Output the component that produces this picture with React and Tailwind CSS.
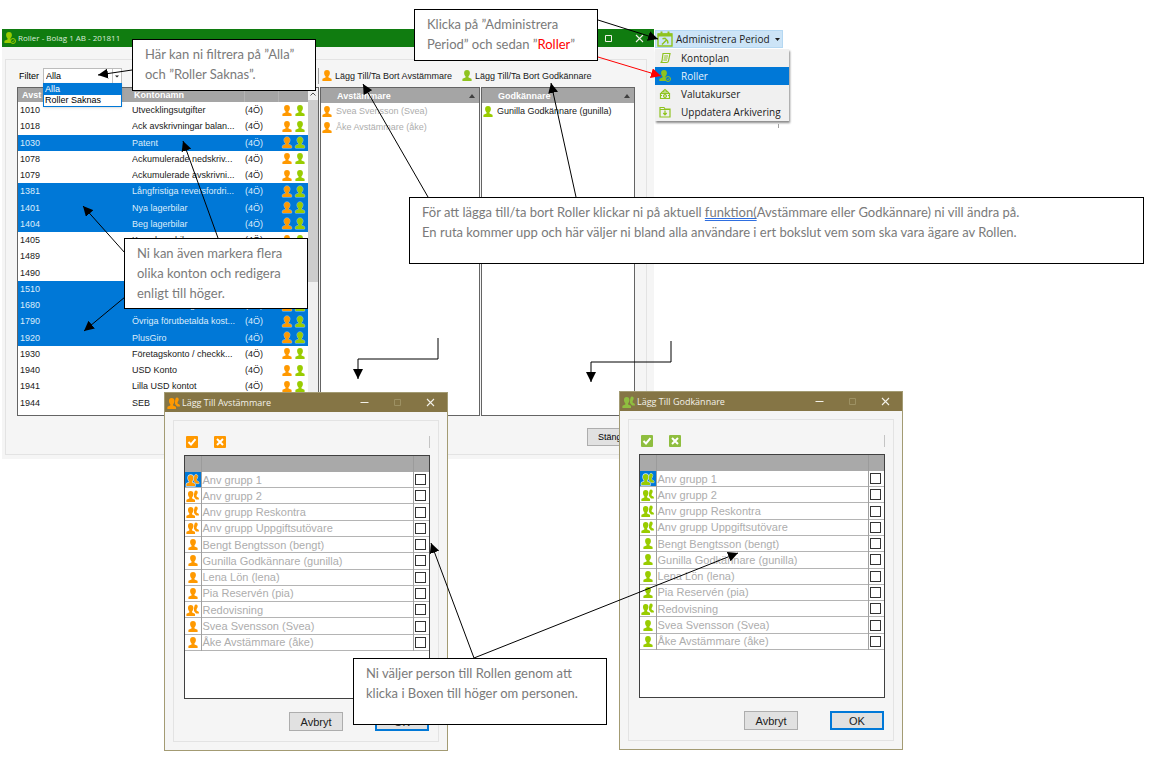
import { useId } from "react";

const ORANGE = "#ff9900";
const GREEN = "#99cc00";

const accounts = [
  ["1010", "Utvecklingsutgifter", "(4Ö)"],
  ["1018", "Ack avskrivningar balan...", "(4Ö)"],
  ["1030", "Patent", "(4Ö)", true],
  ["1078", "Ackumulerade nedskriv...", "(4Ö)"],
  ["1079", "Ackumulerade avskrivni...", "(4Ö)"],
  ["1381", "Långfristiga reversfordri...", "(4Ö)", true],
  ["1401", "Nya lagerbilar", "(4Ö)", true],
  ["1404", "Beg lagerbilar", "(4Ö)", true],
  ["1405", "Kons lagerbilar", "(4Ö)"],
  ["1489", "", ""],
  ["1490", "", ""],
  ["1510", "", "", true],
  ["1680", "Andra kortfristiga fordri...", "(4Ö)", true],
  ["1790", "Övriga förutbetalda kost...", "(4Ö)", true],
  ["1920", "PlusGiro", "(4Ö)", true],
  ["1930", "Företagskonto / checkk...", "(4Ö)"],
  ["1940", "USD Konto", "(4Ö)"],
  ["1941", "Lilla USD kontot", "(4Ö)"],
  ["1944", "SEB", ""],
];

const users = [
  ["Anv grupp 1", true],
  ["Anv grupp 2", true],
  ["Anv grupp Reskontra", true],
  ["Anv grupp Uppgiftsutövare", true],
  ["Bengt Bengtsson (bengt)"],
  ["Gunilla Godkännare (gunilla)"],
  ["Lena Lön (lena)"],
  ["Pia Reservén (pia)"],
  ["Redovisning", true],
  ["Svea Svensson (Svea)"],
  ["Åke Avstämmare (åke)"],
];

const PERSON =
  "M5 0C7 0 7.9 1.2 7.9 3C7.9 4.6 7.2 5.6 6.5 6.3V7.4C7 8 9.6 7.9 9.6 9.2V11H0.4V9.2C0.4 7.9 3 8 3.5 7.4V6.3C2.8 5.6 2.1 4.6 2.1 3C2.1 1.2 3 0 5 0Z";

function Person({ color, outline }) {
  return (
    <svg viewBox="0 0 10 11" className="h-[11px] w-[10px] shrink-0 overflow-visible" aria-hidden="true">
      <path d={PERSON} fill={color} stroke={outline ? "#a9d0f0" : "none"} strokeWidth="0.9" paintOrder="stroke" />
    </svg>
  );
}

function Group({ color, outline, gap = "#ffffff" }) {
  return (
    <svg viewBox="0 0 13 12" className="h-3 w-[13px] shrink-0 overflow-visible" aria-hidden="true">
      <path
        d="M10 0.4C11.3 0.4 11.8 1.4 11.7 2.6C11.6 3.8 11.1 4.6 10.6 5.2V6.6C11 7.3 12.9 7.2 12.9 8.6V9.6H10L8 7V4L8.6 1.6C8.9 0.8 9.4 0.4 10 0.4Z"
        fill={color}
        stroke={outline ? "#d3e7f8" : "none"}
        strokeWidth="0.9"
        paintOrder="stroke"
      />
      <g transform="translate(0 1) scale(0.94 1)">
        <path d={PERSON} fill={color} stroke={outline ? "#d3e7f8" : gap} strokeWidth="1.4" paintOrder="stroke" />
      </g>
    </svg>
  );
}

function PersonCheck({ color, ring }) {
  return (
    <svg viewBox="0 0 12 12" className="h-3 w-3 shrink-0" aria-hidden="true">
      <path d={PERSON} fill={color} />
      <circle cx="9" cy="9" r="2.5" fill={ring} stroke={color} strokeWidth="1" />
      <path d="M7.8 9.1L8.8 10L10.3 8.1" fill="none" stroke={color} strokeWidth="0.8" />
    </svg>
  );
}

function WindowButton({ kind, dim }) {
  const label = { min: "Minimera", max: "Maximera", close: "Stäng fönster" }[kind];
  return (
    <button type="button" aria-label={label} className={dim ? "text-[#9d9163]" : "text-[#f3f1e9]"}>
      <svg viewBox="0 0 9 9" className="h-[9px] w-[9px]" fill="none" stroke="currentColor">
        {kind === "min" && <path d="M0.5 4.5H8.5" />}
        {kind === "max" && <path d="M1.5 1.5H7.5V7.5H1.5Z" />}
        {kind === "close" && <path d="M1 1L8 8M8 1L1 8" strokeWidth="1.1" />}
      </svg>
    </button>
  );
}

function SortMark() {
  return (
    <svg viewBox="0 0 6 4" className="h-1 w-1.5" aria-hidden="true">
      <path d="M0 4L3 0L6 4Z" fill="#404040" />
    </svg>
  );
}

function AccountTable() {
  return (
    <div className="flex h-full border border-[#646464] bg-white">
      <table className="h-[323px] flex-1 table-fixed border-collapse self-start">
        <colgroup>
          <col className="w-[114px]" />
          <col className="w-[112px]" />
          <col className="w-[34px]" />
          <col />
        </colgroup>
        <thead>
          <tr className="h-[14px] bg-[#a5a5a5] text-left font-bold text-white">
            <th className="p-0 pl-1">Avst</th>
            <th className="p-0 pl-0.5">Kontonamn</th>
            <th className="border-x border-[#b4b4b4] p-0" />
            <th className="p-0" />
          </tr>
        </thead>
        <tbody>
          {accounts.map(([number, name, group, selected]) => (
            <tr key={number} className={selected ? "bg-[#0078d7] text-[#dcecfa]" : "text-[#202020]"}>
              <td className="p-0 pl-0.5">{number}</td>
              <td className="overflow-hidden p-0 whitespace-nowrap">{name}</td>
              <td className="p-0 pl-px">{group}</td>
              <td className="p-0">
                <div className="flex justify-end gap-[3px] pr-[3px]">
                  <Person color={ORANGE} outline={selected} />
                  <Person color={GREEN} outline={selected} />
                </div>
              </td>
            </tr>
          ))}
        </tbody>
      </table>
      <div className="flex w-2.5 flex-col bg-[#f0f0f0]">
        <div className="flex h-3 items-center justify-center">
          <svg viewBox="0 0 6 4" className="h-1 w-1.5" fill="none" stroke="#505050" aria-hidden="true">
            <path d="M0.5 3.5L3 1L5.5 3.5" />
          </svg>
        </div>
        <div className="h-[182px] bg-[#cdcdcd]" />
      </div>
    </div>
  );
}

function RoleList({ title, children }) {
  return (
    <section className="h-full border border-[#646464] bg-white">
      <header className="flex h-[15px] items-center justify-between bg-[#a5a5a5] pr-1 pl-4 font-bold text-white">
        <h2>{title}</h2>
        <SortMark />
      </header>
      <ul>{children}</ul>
    </section>
  );
}

function RoleItem({ color, muted, children }) {
  return (
    <li className={`flex h-4 items-center gap-1 pl-px whitespace-nowrap ${muted ? "text-[#adadad]" : "text-[#202020]"}`}>
      <Person color={color} />
      {children}
    </li>
  );
}

function MainWindow() {
  return (
    <section className="absolute top-[29px] left-0.5 w-[652px] bg-[#f5f5f5] font-['Liberation_Sans',sans-serif] text-[9px] leading-3">
      <header className="flex h-[18px] items-center gap-0.5 bg-[#107c10] pr-2.5 pl-0.5 text-[#dcebdc]">
        <PersonCheck color={GREEN} ring="#107c10" />
        <h1 className="flex-1 font-['Open_Sans',sans-serif] text-[8px]">Roller - Bolag 1 AB - 201811</h1>
        <div className="flex items-center gap-[22px]">
          <WindowButton kind="max" />
          <WindowButton kind="close" />
        </div>
      </header>
      <div className="pt-3 pr-[7px] pb-1 pl-[3px]">
        <div className="border border-[#e3e3e3] pr-[5px] pb-2 pl-[11px]">
          <div className="flex h-[27px] items-center pt-1">
            <div className="relative flex w-[302px] items-center gap-1 pl-0.5">
              <label htmlFor="filter">Filter</label>
              <div className="relative">
                <select id="filter" className="h-4 w-[79px] appearance-none border border-[#bcbcbc] bg-white px-0.5">
                  <option>Alla</option>
                  <option>Roller Saknas</option>
                </select>
                <svg viewBox="0 0 9 14" className="pointer-events-none absolute top-px right-px h-3.5 w-[9px]" aria-hidden="true">
                  <path d="M0.5 0V14" stroke="#c4c4c4" />
                  <path d="M3 6.5H7L5 8.5Z" fill="#202020" />
                </svg>
                <ul className="absolute top-[15px] left-0 z-10 w-[79px] border border-[#0078d7] bg-white leading-[11px] shadow">
                  <li className="bg-[#0078d7] px-px text-white">Alla</li>
                  <li className="px-px">Roller Saknas</li>
                </ul>
              </div>
              <span className="ml-auto h-4 w-px bg-[#a0a0a0]" />
            </div>
            <div className="flex gap-2.5 pl-[3px] text-[#202020]">
              <button type="button" className="flex items-center gap-[3px] whitespace-nowrap">
                <Person color={ORANGE} />
                Lägg Till/Ta Bort Avstämmare
              </button>
              <button type="button" className="flex items-center gap-[3px] whitespace-nowrap">
                <Person color="#8fc31f" />
                Lägg Till/Ta Bort Godkännare
              </button>
            </div>
          </div>
          <div className="grid h-[329px] grid-cols-[302px_160px_1fr] gap-px pr-1.5">
            <AccountTable />
            <RoleList title="Avstämmare">
              <RoleItem color={ORANGE} muted>Svea Svensson (Svea)</RoleItem>
              <RoleItem color={ORANGE} muted>Åke Avstämmare (åke)</RoleItem>
            </RoleList>
            <RoleList title="Godkännare">
              <RoleItem color={GREEN}>Gunilla Godkännare (gunilla)</RoleItem>
            </RoleList>
          </div>
          <div className="flex justify-end pt-3">
            <button type="button" className="h-[18px] w-[54px] border border-[#adadad] bg-[#e1e1e1] pl-2.5 text-left">Stäng</button>
          </div>
        </div>
      </div>
    </section>
  );
}

const menu = [
  ["Kontoplan", <path key="a" d="M4 1.5H11L9.5 9C9.3 10.2 8.5 10.5 7.5 10.5H1.5C2.5 10.3 2.8 9.8 3 9ZM5.2 4H9M4.8 6H8.6M4.4 8H8" />],
  ["Roller", null],
  ["Valutakurser", <path key="c" d="M1.5 5.5H10.5V10.5H1.5ZM2 5L6 1.5L10 5M4 4H8M6 6.6A1.4 1.4 0 1 0 6.01 6.6M2 7.5H3M9 7.5H10" />],
  ["Uppdatera Arkivering", <path key="d" d="M1 1.5H5L6 3H11V11H1ZM6 4.5V8.5M4.3 7L6 8.8L7.7 7M1 3.5H11" />],
];

function PeriodMenu() {
  return (
    <nav className="absolute top-[30px] left-[655px] w-[134px] font-['Open_Sans',sans-serif] text-[10px] leading-4 text-[#1a1a1a]">
      <button type="button" className="flex h-[18px] items-center gap-[3px] border border-[#b5d8f2] bg-[#cce4f7] pr-0.5 pl-px whitespace-nowrap">
        <svg viewBox="0 0 16 16" className="h-4 w-4" aria-hidden="true">
          <path d="M1 3H15V15H1Z" fill="none" stroke="#8fc31f" strokeWidth="1.4" />
          <path d="M1 2.5H15V5.5H1Z" fill="#8fc31f" />
          <path d="M4.5 0.5V3.5M11.5 0.5V3.5" stroke="#8fc31f" strokeWidth="2" />
          <path d="M5 13.5L9.5 9M5.5 7.8L8 7.3L10.5 9.8L11 12.5" fill="none" stroke="#8fc31f" strokeWidth="1.5" />
        </svg>
        <span className="pr-0.5">Administrera Period</span>
        <svg viewBox="0 0 5 3" className="h-[3px] w-[5px]" aria-hidden="true">
          <path d="M0 0H5L2.5 3Z" fill="#202020" />
        </svg>
      </button>
      <ul className="mt-px bg-[#f0f0f0] shadow-[1px_2px_2px_#8c8c8c]">
        {menu.map(([label, icon]) => (
          <li key={label} className={label === "Roller" ? "bg-[#0078d7] text-[#e6f2fc]" : ""}>
            <a href="#roller" className="flex h-[18px] items-center gap-2.5 pl-1 whitespace-nowrap">
              {icon ? (
                <svg viewBox="0 0 12 12" className="h-3 w-3 shrink-0" fill="none" stroke="#8fc31f" strokeWidth="1.2" aria-hidden="true">
                  {icon}
                </svg>
              ) : (
                <PersonCheck color="#8fc31f" ring="#0078d7" />
              )}
              {label}
            </a>
          </li>
        ))}
      </ul>
      <div className="mt-[3px] mr-2.5 ml-auto h-1 w-px bg-[#a0a0a0]" />
    </nav>
  );
}

function ToolButton({ color, label, d }) {
  return (
    <button type="button" aria-label={label}>
      <svg viewBox="0 0 12 12" className="h-3 w-3">
        <rect width="12" height="12" rx="1" fill={color} />
        <path d={d} fill="none" stroke="#ffffff" strokeWidth="2" />
      </svg>
    </button>
  );
}

function RoleDialog({ title, color, accent, place }) {
  const id = useId();
  return (
    <section className={`absolute w-[284px] border border-[#a39b73] bg-[#f5f5f5] font-['Liberation_Sans',sans-serif] text-[11px] leading-3 ${place}`}>
      <header className="flex h-[19px] items-center gap-0.5 bg-[#857545] pr-3 pl-0.5">
        <Group color={accent} gap="#857545" />
        <h2 className="flex-1 font-['Open_Sans',sans-serif] text-[9px] text-[#f3f1e9]">{title}</h2>
        <div className="flex items-center gap-6">
          <WindowButton kind="min" />
          <WindowButton kind="max" dim />
          <WindowButton kind="close" />
        </div>
      </header>
      <div className="p-2">
        <div className="border border-[#e3e3e3] pt-[15px] pr-2 pb-2.5 pl-2.5">
          <div className="flex h-[19px] items-start gap-4 pl-0.5">
            <ToolButton color={accent} label="Markera alla" d="M2.5 6L5 8.5L9.5 3.2" />
            <ToolButton color={accent} label="Avmarkera alla" d="M3 3L9 9M9 3L3 9" />
            <span className="ml-auto h-3 w-px bg-[#c4c4c4]" />
          </div>
          <div className="h-[244px] border border-[#404040] bg-white">
            <table className="h-[195px] w-full table-fixed border-collapse">
              <colgroup>
                <col className="w-4" />
                <col />
                <col className="w-4" />
              </colgroup>
              <thead>
                <tr className="h-4 bg-[#a9a9a9]">
                  <th className="border-r border-[#9b9b9b] p-0" />
                  <th className="border-r border-[#9b9b9b] p-0" />
                  <th className="p-0" />
                </tr>
              </thead>
              <tbody>
                {users.map(([name, group], i) => (
                  <tr key={name} className="border-b border-[#b4b4b4] text-[#adadad]">
                    <td className={`border-r border-[#a0a0a0] p-0 ${i === 0 ? "bg-[#0078d7]" : ""}`}>
                      <div className="flex justify-center">
                        {group ? <Group color={color} outline={i === 0} /> : <Person color={color} />}
                      </div>
                    </td>
                    <td className="border-r border-[#a0a0a0] p-0 pl-px whitespace-nowrap">
                      <label htmlFor={`${id}-${i}`}>{name}</label>
                    </td>
                    <td className="p-0 pl-px">
                      <input
                        id={`${id}-${i}`}
                        type="checkbox"
                        className="block h-[11px] w-[11px] appearance-none border border-[#333333] bg-white checked:bg-[#0078d7]"
                      />
                    </td>
                  </tr>
                ))}
              </tbody>
            </table>
          </div>
          <div className="flex justify-end gap-8 pt-[13px] pr-px text-[#202020]">
            <button type="button" className="h-[19px] w-[54px] border border-[#adadad] bg-[#e1e1e1]">Avbryt</button>
            <button type="button" className="h-[19px] w-[54px] border-2 border-[#0078d7] bg-[#e1e1e1]">OK</button>
          </div>
        </div>
      </div>
    </section>
  );
}

function Callout({ place, children }) {
  return (
    <aside className={`absolute border border-black bg-white px-3 py-1 font-[Lato,sans-serif] text-[13px] leading-5 whitespace-nowrap text-[#7a7a7a] ${place}`}>
      {children}
    </aside>
  );
}

const arrows = [
  "M132 70L98 75",
  "M598 20L658 39",
  "M428 197L363 84",
  "M576 197L551 83",
  "M125 253L83 206",
  "M218 238L183 141",
  "M125 297L84 331",
  "M438 338V359H358V379",
  "M671 341V362H591V382",
  "M474 658L431 543",
  "M474 658L738 553",
];

function Arrows() {
  return (
    <svg className="pointer-events-none absolute inset-0 h-full w-full" fill="none" aria-hidden="true">
      <defs>
        <marker id="head-black" markerUnits="userSpaceOnUse" markerWidth="11" markerHeight="10" refX="10" refY="5" orient="auto">
          <path d="M0 0L10 5L0 10Z" fill="#000000" />
        </marker>
        <marker id="head-red" markerUnits="userSpaceOnUse" markerWidth="11" markerHeight="10" refX="10" refY="5" orient="auto">
          <path d="M0 0L10 5L0 10Z" fill="#ff0000" />
        </marker>
      </defs>
      {arrows.map((d) => (
        <path key={d} d={d} stroke="#000000" markerEnd="url(#head-black)" />
      ))}
      <path d="M598 57L661 76" stroke="#ff0000" markerEnd="url(#head-red)" />
    </svg>
  );
}

export default function App() {
  return (
    <main className="relative min-h-screen min-w-[1150px] overflow-hidden bg-white">
      <MainWindow />
      <PeriodMenu />
      <RoleDialog title="Lägg Till Avstämmare" color={ORANGE} accent={ORANGE} place="top-[392px] left-[164px]" />
      <RoleDialog title="Lägg Till Godkännare" color={GREEN} accent="#8fbe3f" place="top-[391px] left-[619px]" />
      <Arrows />
      <Callout place="top-[39px] left-[132px] w-[184px] h-[52px]">
        <p>Här kan ni filtrera på ”Alla”</p>
        <p>och ”Roller Saknas”.</p>
      </Callout>
      <Callout place="top-[9px] left-[414px] w-[184px] h-[52px]">
        <p>Klicka på ”Administrera</p>
        <p>Period” och sedan ”<span className="text-[#ff0000]">Roller</span>”</p>
      </Callout>
      <Callout place="top-[238px] left-[124px] w-[184px] h-[71px]">
        <p>Ni kan även markera flera</p>
        <p>olika konton och redigera</p>
        <p>enligt till höger.</p>
      </Callout>
      <Callout place="top-[197px] left-[409px] w-[735px] h-[67px]">
        <p>
          För att lägga till/ta bort Roller klickar ni på aktuell{" "}
          <span className="underline decoration-[#2f6fe0] decoration-double [text-decoration-skip-ink:none]">funktion(</span>Avstämmare eller Godkännare) ni vill ändra på.
        </p>
        <p>En ruta kommer upp och här väljer ni bland alla användare i ert bokslut vem som ska vara ägare av Rollen.</p>
      </Callout>
      <Callout place="top-[658px] left-[353px] w-[254px] h-[67px]">
        <p>Ni väljer person till Rollen genom att</p>
        <p>klicka i Boxen till höger om personen.</p>
      </Callout>
    </main>
  );
}
